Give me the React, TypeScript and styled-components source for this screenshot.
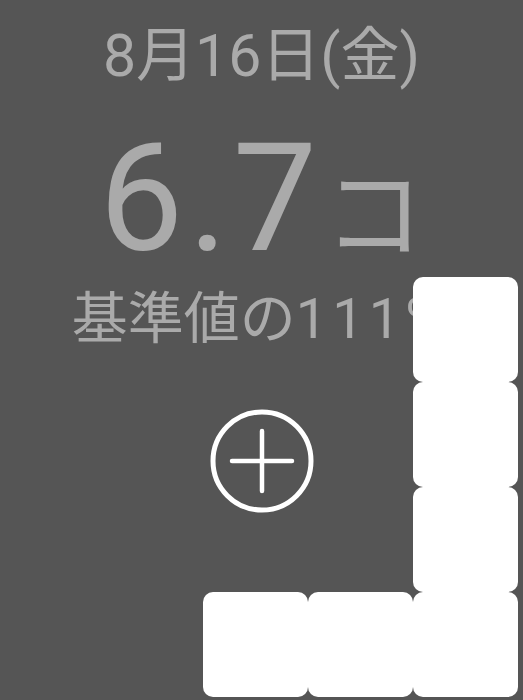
import React from "react";
import styled, { createGlobalStyle } from "styled-components";

const GlobalStyle = createGlobalStyle`
  html, body {
    margin: 0;
    padding: 0;
    background: #555555;
  }
  body {
    font-family: Roboto, "Noto Sans CJK JP", sans-serif;
  }
`;

const Screen = styled.div`
  position: relative;
  width: 523px;
  height: 700px;
  overflow: hidden;
  background: #555555;
`;

const Summary = styled.div`
  display: flex;
  flex-direction: column;
  align-items: center;
  padding-top: 16px;
  color: #aaaaaa;
`;

const DateLabel = styled.div`
  font-size: 59px;
  line-height: 80px;
  font-weight: 400;
`;

const Amount = styled.div`
  display: flex;
  align-items: baseline;
  margin-top: 33px;
  font-size: 150px;
  line-height: 140px;
  font-weight: 400;
  letter-spacing: 5px;
`;

const Unit = styled.span`
  font-size: 100px;
  margin-left: 2px;
  letter-spacing: 0;
`;

const Ratio = styled.div`
  margin-top: -2px;
  font-size: 56px;
  line-height: 70px;
  white-space: nowrap;
`;

const Percent = styled.span`
  letter-spacing: 5px;
`;

const AddButton = styled.button`
  margin-top: 55px;
  width: 104px;
  height: 104px;
  padding: 0;
  border: none;
  background: transparent;
  cursor: pointer;
`;

// the falling block piece drawn over the page
const Piece = styled.div`
  position: absolute;
  left: 203px;
  top: 277px;
  display: grid;
  grid-template-columns: repeat(3, 105px);
  grid-template-rows: repeat(4, 105px);
`;

const Block = styled.div<{ col: number; row: number }>`
  grid-column: ${(p) => p.col};
  grid-row: ${(p) => p.row};
  background: #ffffff;
  border-radius: 10px;
`;

const cells = [
  { col: 3, row: 1 },
  { col: 3, row: 2 },
  { col: 3, row: 3 },
  { col: 1, row: 4 },
  { col: 2, row: 4 },
  { col: 3, row: 4 },
];

export default function App() {
  return (
    <Screen>
      <GlobalStyle />
      <Summary>
        <DateLabel>8月16日(金)</DateLabel>
        <Amount>
          6.7<Unit>コ</Unit>
        </Amount>
        <Ratio>
          基準値の<Percent>111%</Percent>
        </Ratio>
        <AddButton aria-label="追加">
          <svg width="104" height="104" viewBox="0 0 104 104">
            <circle cx="52" cy="52" r="49" fill="none" stroke="#fff" strokeWidth="5" />
            <path d="M22 52H82M52 22V82" stroke="#fff" strokeWidth="4.5" strokeLinecap="round" />
          </svg>
        </AddButton>
      </Summary>
      <Piece>
        {cells.map((c) => (
          <Block key={`${c.col}-${c.row}`} col={c.col} row={c.row} />
        ))}
      </Piece>
    </Screen>
  );
}
